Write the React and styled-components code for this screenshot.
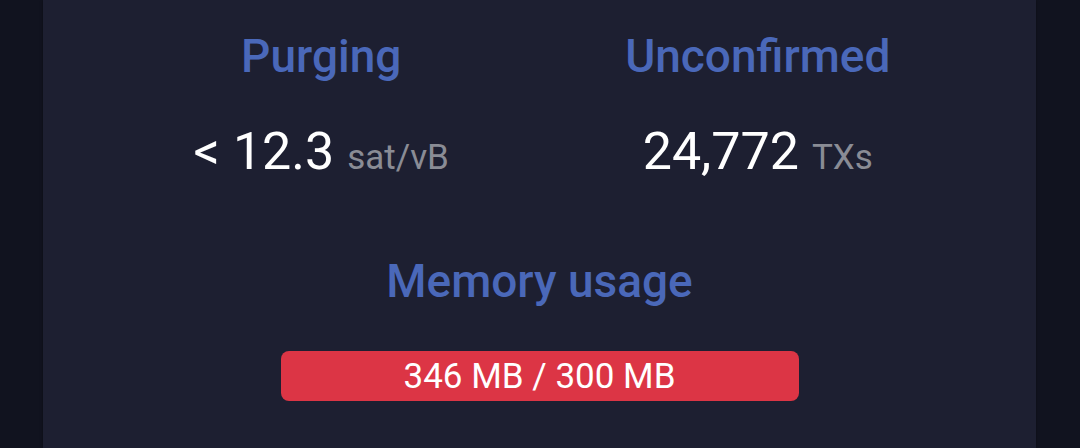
import React from 'react';
import styled, { createGlobalStyle } from 'styled-components';

const GlobalStyle = createGlobalStyle`
  html, body {
    margin: 0;
    padding: 0;
    background: #11131f;
    font-family: Roboto, 'Liberation Sans', sans-serif;
  }
`;

const Page = styled.div`
  width: 1080px;
  height: 448px;
  display: flex;
  padding-left: 43px;
  box-sizing: border-box;
  background: #11131f;
  overflow: hidden;
`;

const Card = styled.div`
  width: 993px;
  background: #1d1f31;
  box-shadow: 0 0 3px rgba(0, 0, 0, 0.35);
  padding: 28px 60px 0;
  box-sizing: border-box;
  display: flex;
  flex-direction: column;
  align-items: center;
`;

const StatsRow = styled.div`
  width: 100%;
  display: grid;
  grid-template-columns: 1fr 1fr;
`;

const Stat = styled.div`
  display: flex;
  flex-direction: column;
  align-items: center;
`;

const Title = styled.h5`
  margin: 0;
  font-size: 46px;
  font-weight: 500;
  color: #4a68b9;
  line-height: 56px;
`;

const Value = styled.div`
  margin-top: 40px;
  font-size: 52px;
  color: #ffffff;
  line-height: 56px;
  white-space: nowrap;
`;

const Unit = styled.span`
  font-size: 35px;
  color: #8a8c95;
`;

const Memory = styled.div`
  margin-top: 67px;
  display: flex;
  flex-direction: column;
  align-items: center;
`;

const Bar = styled.div`
  margin-top: 42px;
  width: 518px;
  height: 50px;
  border-radius: 8px;
  background: #dc3545;
  color: #ffffff;
  font-size: 35px;
  display: flex;
  align-items: center;
  justify-content: center;
`;

export default function App() {
  return (
    <Page>
      <GlobalStyle />
      <Card>
        <StatsRow>
          <Stat>
            <Title>Purging</Title>
            <Value>
              &lt; 12.3 <Unit>sat/vB</Unit>
            </Value>
          </Stat>
          <Stat>
            <Title>Unconfirmed</Title>
            <Value>
              24,772 <Unit>TXs</Unit>
            </Value>
          </Stat>
        </StatsRow>
        <Memory>
          <Title>Memory usage</Title>
          <Bar>346 MB / 300 MB</Bar>
        </Memory>
      </Card>
    </Page>
  );
}
